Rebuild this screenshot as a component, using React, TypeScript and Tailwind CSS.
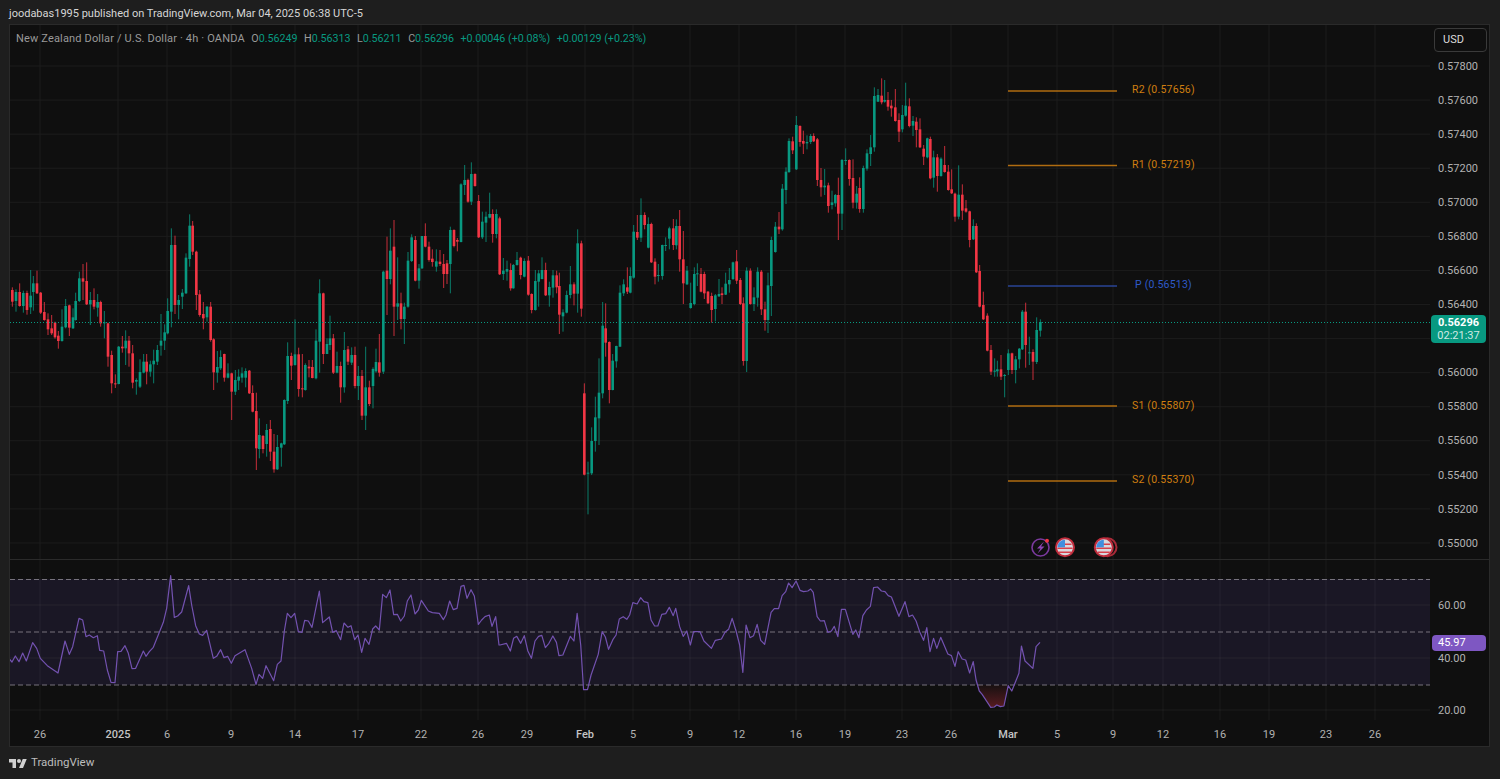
import React from 'react';

// [zoomX, bodyTop, bodyBottom, high, low, up] in crop coordinates, one block per crop of the chart
type Row = [number, number, number, number, number, number];
type Block = { ox: number; oy: number; rows: Row[] };

const blocks: Block[] = [
  {
    ox: 0,
    oy: 200,
    rows: [
      [37,270,305,262,320,0],[48,276,303,268,335,1],[59,276,318,250,320,0],[70,279,318,272,338,1],[81,279,330,272,344,0],
      [92,287,322,210,342,1],[100,250,276,228,332,1],[111,250,280,212,282,0],[122,278,338,276,342,0],[133,336,360,306,362,0],
      [144,358,388,340,405,0],[155,385,400,345,405,0],[165,368,412,365,416,0],[175,407,423,393,446,0],[186,380,423,328,425,1],
      [197,318,382,297,385,1],[208,316,383,314,408,0],[219,352,385,325,387,1],[227,303,360,278,362,1],[238,235,303,215,306,1],
      [249,235,245,192,300,0],[260,243,313,187,315,0],[271,300,313,276,375,1],[282,300,320,265,328,0],[293,306,323,282,350,1],
      [302,306,370,302,380,0],[313,367,370,333,415,1],[324,370,470,368,500,0],[335,465,550,452,580,0],[346,550,552,523,564,0],
      [356,440,552,438,553,1],[367,440,445,408,458,0],[377,422,445,391,495,1],[387,422,460,408,500,0],[398,460,548,435,565,0],
      [409,540,545,535,584,1],[420,516,560,478,564,1],[431,485,518,462,520,1],[440,485,515,462,553,0],[451,493,515,482,530,1],
      [461,482,493,449,550,1],[472,450,485,435,495,1],[483,422,437,342,467,1],[494,397,422,373,450,1],[503,333,400,295,403,1],
      [514,135,335,85,382,1],[525,135,315,107,342,0],[536,300,315,285,358,1],[547,278,290,267,327,1],[558,173,280,160,282,1],
      [569,77,177,43,200,1],[578,77,155,63,165,0],[589,155,285,152,330,0],[599,283,345,270,350,0],[610,342,355,306,388,0],
      [621,320,352,318,365,1],[632,320,420,306,425,0],[641,418,517,415,570,0],[652,501,518,453,548,1],[662,471,505,451,510,1],
      [673,462,533,461,545,0],[684,520,533,490,535,1],[695,520,575,518,660,0],[706,540,575,510,585,1],[716,530,542,508,570,1],
      [726,520,533,502,548,1],[737,513,533,505,562,1],[748,512,580,510,582,0],[758,579,635,556,637,0],[769,633,745,578,810,0],
      [778,705,747,655,775,1],[789,708,747,705,760,0],[800,690,732,672,770,1],[811,687,755,660,783,0],[822,755,808,702,818,0],
      [832,741,808,705,810,1],[844,730,743,728,800,1],[853,600,733,598,735,1],[863,468,603,427,612,1],[874,468,497,458,540,0],
      [885,463,495,358,497,1],[896,463,567,443,590,0],
    ],
  },
  {
    ox: 300,
    oy: 150,
    rows: [
      [7,715,718,612,742,0],[16,645,720,640,722,1],[27,650,655,630,682,0],[37,651,684,630,685,0],[48,572,685,538,688,1],
      [59,430,575,388,668,1],[70,430,612,428,642,0],[81,582,612,565,600,1],[90,565,585,497,600,1],[100,565,668,552,672,0],
      [111,648,668,605,670,1],[122,648,712,635,758,0],[133,600,712,546,728,1],[144,598,635,588,645,0],[155,615,638,592,645,1],
      [165,615,708,590,715,0],[175,678,708,648,750,1],[186,678,797,660,810,0],[197,712,797,590,840,1],[208,712,762,692,768,0],
      [219,657,708,652,775,1],[228,636,664,596,668,1],[238,637,668,552,680,0],[250,365,665,362,672,1],[261,362,387,260,495,0],
      [271,302,387,235,403,1],[282,290,470,210,558,0],[293,460,470,322,510,1],[303,460,507,428,538,0],[313,470,507,458,582,1],
      [324,332,470,306,473,1],[335,262,333,253,336,1],[346,270,392,258,394,0],[357,355,392,342,416,1],[366,258,355,258,357,1],
      [376,258,290,220,292,0],[387,290,330,275,335,0],[397,326,336,298,350,0],[409,334,350,298,365,1],[420,335,342,300,348,0],
      [431,342,372,312,414,0],[441,340,372,330,402,0],[451,240,342,230,430,1],[462,240,288,238,292,0],[472,270,275,264,304,0],
      [483,103,276,100,277,1],[494,90,105,45,135,1],[504,90,155,86,158,0],[514,72,155,37,165,1],[525,72,108,70,110,0],
      [536,153,262,135,264,0],[547,215,262,185,267,1],[558,200,218,185,276,1],[569,192,203,128,205,1],[578,192,252,178,278,0],
      [589,192,252,178,265,1],[599,205,373,200,375,0],[610,362,372,324,390,1],[621,357,365,332,392,1],[632,360,415,340,422,0],
      [640,345,415,342,416,1],[651,330,345,306,347,1],[662,323,375,320,388,0],[673,333,380,325,382,1],[685,332,434,318,437,0],
      [695,432,480,430,490,0],[706,393,480,360,482,1],[716,370,395,360,470,1],[726,360,387,322,388,1],[737,360,436,338,438,0],
      [748,411,436,395,470,1],[759,376,413,360,443,1],[770,376,412,362,430,0],[778,408,494,368,552,0],[789,487,499,478,545,1],
      [800,435,488,422,490,1],[811,403,435,348,445,1],[822,403,431,397,466,0],[833,280,431,238,488,1],[844,280,476,272,500,0],
    ],
  },
  {
    ox: 560,
    oy: 180,
    rows: [
      [73,640,884,610,886,0],[84,878,880,845,1003,1],[95,783,880,742,885,1],[106,712,783,650,815,1],[117,638,715,535,795,1],
      [128,437,640,366,655,1],[137,445,488,370,530,0],[148,486,630,484,670,0],[158,542,630,522,631,1],[169,498,544,497,563,1],
      [180,338,500,316,501,1],[191,313,340,298,348,1],[202,322,335,262,342,0],[211,288,338,262,340,1],[221,155,293,135,296,1],
      [232,156,173,105,180,0],[243,105,173,55,186,1],[254,105,135,97,148,0],[265,132,203,112,205,1],[274,132,247,128,249,0],
      [285,245,290,235,313,0],[295,285,288,252,305,1],[307,195,288,194,299,1],[317,195,197,172,213,1],[328,145,176,140,208,1],
      [340,145,195,117,210,0],[349,138,196,118,208,1],[359,138,238,90,275,0],[370,238,310,153,372,0],[381,272,313,258,315,1],
      [392,369,384,308,386,1],[403,282,372,262,376,1],[412,280,283,250,318,1],[423,282,335,264,337,0],[433,282,340,275,357,0],
      [444,335,370,333,372,0],[455,348,390,338,428,0],[466,346,387,342,424,1],[477,342,349,297,351,1],[486,340,345,322,372,0],
      [497,311,344,278,345,1],[508,300,313,264,338,1],[519,247,297,245,300,1],[530,244,302,210,312,0],[541,300,372,294,375,0],
      [550,370,543,352,557,0],[560,272,543,262,576,1],[571,272,372,265,374,0],[582,352,372,322,393,1],[593,275,353,262,380,1],
      [604,275,388,270,405,0],[615,388,420,365,452,0],[624,316,420,278,459,1],[634,180,318,170,408,1],[646,140,216,126,218,1],
      [657,140,148,96,162,0],[667,26,148,12,152,1],
    ],
  },
  {
    ox: 770,
    oy: 70,
    rows: [
      [48,305,360,292,402,1],[57,213,306,205,309,1],[68,214,241,200,252,0],[79,165,298,138,300,1],[90,168,216,166,230,0],
      [100,213,221,182,252,0],[111,216,220,196,238,1],[122,198,216,192,222,1],[131,198,214,190,216,0],[142,208,330,204,348,0],
      [153,330,352,294,380,0],[164,347,352,297,375,1],[175,346,408,338,428,0],[186,397,405,362,418,1],[196,375,400,372,410,1],
      [205,375,431,323,510,0],[216,270,431,267,480,1],[227,270,273,235,285,1],[238,270,327,268,347,0],[249,324,398,268,415,0],
      [260,371,398,348,416,1],[269,354,417,322,428,0],[280,294,417,287,428,1],[291,250,296,238,302,1],[302,232,252,195,288,1],
      [313,78,232,52,245,1],[324,75,95,57,96,1],[335,77,97,25,103,0],[344,90,95,30,98,1],[354,90,110,66,122,0],
      [364,107,115,90,140,0],[376,112,153,57,155,0],[387,150,185,130,216,0],[397,135,178,105,187,1],[407,107,137,38,140,1],
      [418,109,168,85,172,0],[429,153,167,138,198,1],[439,155,180,142,232,0],[450,178,232,145,234,0],[461,236,260,225,285,0],
      [472,205,262,203,265,1],[481,207,325,200,328,0],[491,262,323,242,353,1],[502,262,318,252,365,0],[513,266,318,262,320,1],
      [524,285,306,228,308,0],[535,305,360,285,362,0],[545,358,370,298,372,0],[555,371,440,368,455,0],[566,374,440,286,448,1],
      [577,374,422,343,450,0],[588,415,425,390,428,0],[599,424,510,422,532,0],[610,468,508,448,510,1],[619,468,607,460,609,0],
    ],
  },
  {
    ox: 960,
    oy: 270,
    rows: [
      [59,3,110,-15,112,0],[70,105,148,65,150,0],[82,137,242,130,244,0],[93,240,305,225,315,0],[104,302,304,265,320,1],
      [112,298,304,272,320,1],[123,298,320,255,330,0],[134,315,318,312,382,1],[145,250,300,238,315,1],[156,250,300,248,312,0],
      [167,268,300,258,340,1],[178,236,268,234,295,1],[187,125,238,120,240,1],[197,125,225,98,293,0],[208,247,250,200,285,1],
      [219,246,275,238,330,0],[230,180,276,142,282,1],[241,156,182,148,200,1],
    ],
  },
];

const rsiLeft = [
  [28,282],[36,291],[46,273],[57,290],[68,264],[79,288],[98,233],[110,250],[121,280],[142,302],[174,324],[195,228],[208,268],[218,245],[237,160],[248,165],[258,215],[268,210],[280,218],[292,212],[299,256],[311,258],[322,315],[333,352],[345,353],[353,260],[363,259],[375,242],[385,265],[396,311],[407,310],[430,258],[438,274],[448,260],[460,247],[490,172],[500,130],[512,32],[523,157],[533,153],[545,141],[566,62],[575,120],[587,182],[598,207],[608,211],[620,196],[640,280],[650,274],[662,254],[672,278],[683,274],[694,295],[705,272],[735,254],[755,310],[768,358],[777,328],[788,340],[798,302],[821,347],[832,298],[843,288],[853,198],[862,145],[873,158],[884,145],[895,200],[906,202],[914,166],[925,168],[936,187],[958,78],[968,173],[988,156],[998,202],[1009,197],[1022,224],[1032,174],[1044,187],[1053,182],[1064,224],[1074,210],[1085,262],[1095,220],[1107,238],[1118,192],[1127,183],[1138,195],[1148,88],[1159,98],[1170,75],[1181,149],[1192,148],[1202,168],[1213,153],[1222,108],[1233,90],[1245,147],[1255,135],[1264,106],[1285,138],[1297,143],[1318,145],[1330,164],[1338,150],[1349,108],[1360,134],[1371,130],[1383,64],[1392,61],[1401,100],[1413,74],[1423,93],[1435,178],[1445,165],[1455,155],[1468,150],[1476,184],[1487,155],[1497,240],
];

const rsiRight = [
  [0,240],[18,235],[29,258],[38,220],[47,214],[58,235],[68,212],[78,258],[88,280],[98,228],[108,214],[117,211],[127,248],[137,235],[148,213],[158,232],[165,272],[176,270],[197,214],[207,228],[216,145],[226,240],[234,374],[245,374],[255,330],[275,268],[286,200],[295,216],[304,253],[316,224],[325,210],[334,162],[345,155],[355,163],[363,150],[372,113],[384,117],[394,98],[403,110],[414,113],[423,165],[433,183],[442,183],[453,148],[464,146],[474,127],[485,152],[492,130],[503,185],[513,214],[523,198],[533,240],[542,200],[560,200],[571,228],[592,250],[603,226],[620,222],[630,202],[640,193],[650,160],[661,198],[671,240],[680,322],[689,180],[700,218],[710,212],[720,178],[730,226],[741,238],[759,142],[768,131],[780,131],[790,92],[800,80],[808,54],[818,68],[829,48],[840,76],[850,80],[862,78],[870,72],[877,82],[888,155],[897,168],[908,167],[918,202],[928,198],[936,184],[946,215],[956,133],[967,133],[988,208],[996,195],[1005,218],[1016,152],[1026,135],[1037,124],[1046,68],[1057,66],[1068,78],[1078,80],[1087,92],[1096,96],[1117,154],[1134,110],[1145,155],[1155,150],[1165,168],[1175,200],[1186,226],[1195,188],[1204,260],[1214,220],[1223,250],[1234,217],[1254,267],[1264,272],[1274,304],[1283,260],[1294,282],[1304,285],[1315,324],[1325,290],[1333,345],[1342,378],[1350,388],[1374,427],[1384,426],[1391,420],[1401,425],[1411,423],[1423,362],[1433,378],[1453,325],[1460,243],[1470,288],[1492,310],[1501,245],[1512,232],
];

const rsiPoints = [
  ...rsiLeft.map(([x, y]) => [x / 3, 565 + y / 3]),
  ...rsiRight.map(([x, y]) => [500 + x / 2.8, 565 + y / 3]),
];

const oversold = rsiRight
  .filter(([x]) => x >= 1336 && x <= 1423)
  .map(([x, y]) => `${500 + x / 2.8},${565 + y / 3}`)
  .join(' ');

const ticks: [number, string, boolean?][] = [
  [40,'26'],[118,'2025',true],[167,'6'],[231,'9'],[295,'14'],[358,'17'],[421,'22'],[478,'26'],[527,'29'],[585,'Feb',true],
  [633,'5'],[690,'9'],[739,'12'],[796,'16'],[845,'19'],[902,'23'],[951,'26'],[1008,'Mar',true],[1057,'5'],[1113,'9'],
  [1163,'12'],[1220,'16'],[1269,'19'],[1326,'23'],[1375,'26'],
];

// 0.56200 sits under the last price badge, so its row stays empty
const prices = ['0.57800','0.57600','0.57400','0.57200','0.57000','0.56800','0.56600','0.56400','','0.56000','0.55800','0.55600','0.55400','0.55200','0.55000'];

const pivots = [
  { y: 91, labelY: 93, label: 'R2 (0.57656)', x: 1132, color: '#b06c10', text: '#d07f10' },
  { y: 165.5, labelY: 167.5, label: 'R1 (0.57219)', x: 1132, color: '#b06c10', text: '#d07f10' },
  { y: 286, labelY: 288, label: 'P (0.56513)', x: 1135, color: '#2a4596', text: '#2e5ac8' },
  { y: 406, labelY: 409, label: 'S1 (0.55807)', x: 1132, color: '#b06c10', text: '#d07f10' },
  { y: 481, labelY: 483, label: 'S2 (0.55370)', x: 1132, color: '#b06c10', text: '#d07f10' },
];

const GREEN = '#089981';
const RED = '#f23645';

const Flag: React.FC<{ cx: number; cy: number }> = ({ cx, cy }) => (
  <g>
    <circle cx={cx} cy={cy} r={9} fill="#d8d8de" stroke="#c02c3c" strokeWidth={2} />
    <path d={`M${cx - 6.5} ${cy - 3}h13M${cx - 7.5} ${cy + 1}h15M${cx - 6} ${cy + 5}h12`} stroke="#d8404c" strokeWidth={1.6} />
    <path d={`M${cx - 7.6} ${cy}A7.6 7.6 0 0 1 ${cx} ${cy - 7.6}V${cy}Z`} fill="#3f8fe0" />
  </g>
);

const MainChart: React.FC = () => (
  <svg viewBox="10 25 1420 534" width={1420} height={534} className="block">
    {prices.map((_, i) => (
      <rect key={i} x={10} y={66 + i * 34.07 - 0.5} width={1420} height={1} fill="#1c1c1c" />
    ))}
    {ticks.map(([x]) => (
      <rect key={x} x={x - 0.5} y={25} width={1} height={534} fill="#1c1c1c" />
    ))}
    {blocks.map((b) =>
      b.rows.map(([zx, top, bot, hi, lo, up]) => {
        const x = b.ox + zx / 3;
        const color = up ? GREEN : RED;
        return (
          <g key={`${b.ox}-${zx}`} fill={color}>
            <rect x={x - 0.5} y={b.oy + hi / 3} width={1} height={(lo - hi) / 3} fillOpacity={0.8} />
            <rect x={x - 1.3} y={b.oy + top / 3} width={2.6} height={Math.max((bot - top) / 3, 1)} />
          </g>
        );
      }),
    )}
    <line x1={10} x2={1430} y1={322.5} y2={322.5} stroke={GREEN} strokeDasharray="1 2" />
    {pivots.map((p) => (
      <g key={p.label}>
        <line x1={1008} x2={1117} y1={p.y} y2={p.y} stroke={p.color} strokeWidth={1.5} />
        <text x={p.x} y={p.labelY} fill={p.text} fontSize={10.5} letterSpacing={0.2}>
          {p.label}
        </text>
      </g>
    ))}
    <circle cx={1040.5} cy={547.5} r={8.5} fill="none" stroke="#7b3a9e" strokeWidth={1.6} />
    <path d="M1044 541.5l-7 7h3.5l-3 5 7-7h-3.5z" fill="#8d44b4" />
    <circle cx={1047} cy={540.7} r={2} fill="#f23645" />
    <Flag cx={1065} cy={547.3} />
    <circle cx={1107.5} cy={547.3} r={9} fill="none" stroke="#a92a38" strokeWidth={2} />
    <Flag cx={1103.8} cy={547.3} />
  </svg>
);

const RsiChart: React.FC = () => (
  <svg viewBox="10 560 1420 160" width={1420} height={160} className="block">
    <defs>
      <linearGradient id="osFill" x1="0" y1="0" x2="0" y2="1">
        <stop offset="0" stopColor="#f23645" stopOpacity={0.04} />
        <stop offset="1" stopColor="#f23645" stopOpacity={0.32} />
      </linearGradient>
    </defs>
    <rect x={10} y={579} width={1420} height={106} fill="#1a1725" />
    {[605, 658, 710].map((y) => (
      <rect key={y} x={10} y={y - 0.5} width={1420} height={1} fill={y < 685 ? '#27242f' : '#1c1c1c'} />
    ))}
    {ticks.map(([x]) => (
      <rect key={x} x={x - 0.5} y={560} width={1} height={160} fill="#ffffff" fillOpacity={0.05} />
    ))}
    {[579.5, 632, 685].map((y) => (
      <line key={y} x1={10} x2={1430} y1={y} y2={y} stroke="#77737d" strokeDasharray="5 3" />
    ))}
    <polygon points={`977,685 ${oversold} 1008,685`} fill="url(#osFill)" />
    <polyline
      points={rsiPoints.map(([x, y]) => `${x},${y}`).join(' ')}
      fill="none"
      stroke="#7352b0"
      strokeWidth={1.2}
      strokeLinejoin="round"
    />
  </svg>
);

export default function App() {
  return (
    <div className="flex h-[779px] w-[1500px] flex-col overflow-hidden bg-[#1e1e1e] font-['Roboto',sans-serif]">
      {/* Published by line */}
      <div className="flex h-6 items-center pl-[9px] pt-[5px] text-[11px] text-[#d6d6d6]">
        joodabas1995 published on TradingView.com, Mar 04, 2025 06:38 UTC-5
      </div>

      {/* Chart frame */}
      <div className="ml-[9px] mr-[10px] flex h-[723px] flex-col border border-[#2a2a2a] bg-[#0f0f0f]">
        <div className="relative flex h-[534px]">
          <MainChart />
          <div className="pl-2 pt-[25px] text-[11px] text-[#b2b2b2]">
            {prices.map((p, i) => (
              <div key={i} className="flex h-[34.07px] items-center">
                {p}
              </div>
            ))}
          </div>

          {/* Legend */}
          <div className="absolute left-[6px] top-[6px] flex gap-[6.5px] text-[10.7px] text-[#9a9a9a]">
            <span className="text-[11px] tracking-[0.16px]">New Zealand Dollar / U.S. Dollar · 4h · OANDA</span>
            <span>
              O<span className="text-[#089981]">0.56249</span>
            </span>
            <span>
              H<span className="text-[#089981]">0.56313</span>
            </span>
            <span>
              L<span className="text-[#089981]">0.56211</span>
            </span>
            <span>
              C<span className="text-[#089981]">0.56296</span>
            </span>
            <span className="text-[#089981]">+0.00046 (+0.08%)</span>
            <span className="text-[#089981]">+0.00129 (+0.23%)</span>
          </div>

          <div className="absolute left-[1424px] top-[3px] flex h-6 w-[53px] items-center rounded border border-[#3a3a3a] bg-[#0f0f0f] pl-2 text-[11px] text-[#dcdcdc]">
            USD
          </div>

          {/* Last price */}
          <div className="absolute left-[1421px] top-[290px] flex h-[28px] w-[55px] flex-col items-center justify-center rounded-sm bg-[#089981] text-[11px] leading-[13px]">
            <span className="font-bold text-white">0.56296</span>
            <span className="text-[#cfe9e4]">02:21:37</span>
          </div>
        </div>

        <div className="h-px bg-[#2a2a2a]" />

        <div className="relative flex h-[160px]">
          <RsiChart />
          <div className="pl-2 pt-5 text-[11px] text-[#b2b2b2]">
            {['60.00', '40.00', '20.00'].map((v) => (
              <div key={v} className="flex h-[52.5px] items-center">
                {v}
              </div>
            ))}
          </div>
          <div className="absolute left-[1422px] top-[75px] flex h-4 w-[54px] items-center rounded-sm bg-[#7e57c2] pl-[6px] text-[11px] text-white">
            45.97
          </div>
        </div>

        {/* Time axis */}
        <div className="relative flex-1 text-[11px] text-[#b2b2b2]">
          {ticks.map(([x, label, strong]) => (
            <span
              key={x}
              className={`absolute top-[7px] -translate-x-1/2 ${strong ? 'font-medium text-[#c4c4c4]' : ''}`}
              style={{ left: x - 10 }}
            >
              {label}
            </span>
          ))}
        </div>
      </div>

      {/* Footer logo */}
      <div className="flex flex-1 items-center gap-[4px] pl-[9px]">
        <svg viewBox="0 0 36 22" width={18} height={11} fill="#d0d0d0">
          <path d="M14 20H7V9H0V2h14v18zM28 20h-8l7.5-18h8L28 20z" />
          <circle cx={20} cy={6} r={4} />
        </svg>
        <span className="text-[11.5px] text-[#bdbdbd]">TradingView</span>
      </div>
    </div>
  );
}
